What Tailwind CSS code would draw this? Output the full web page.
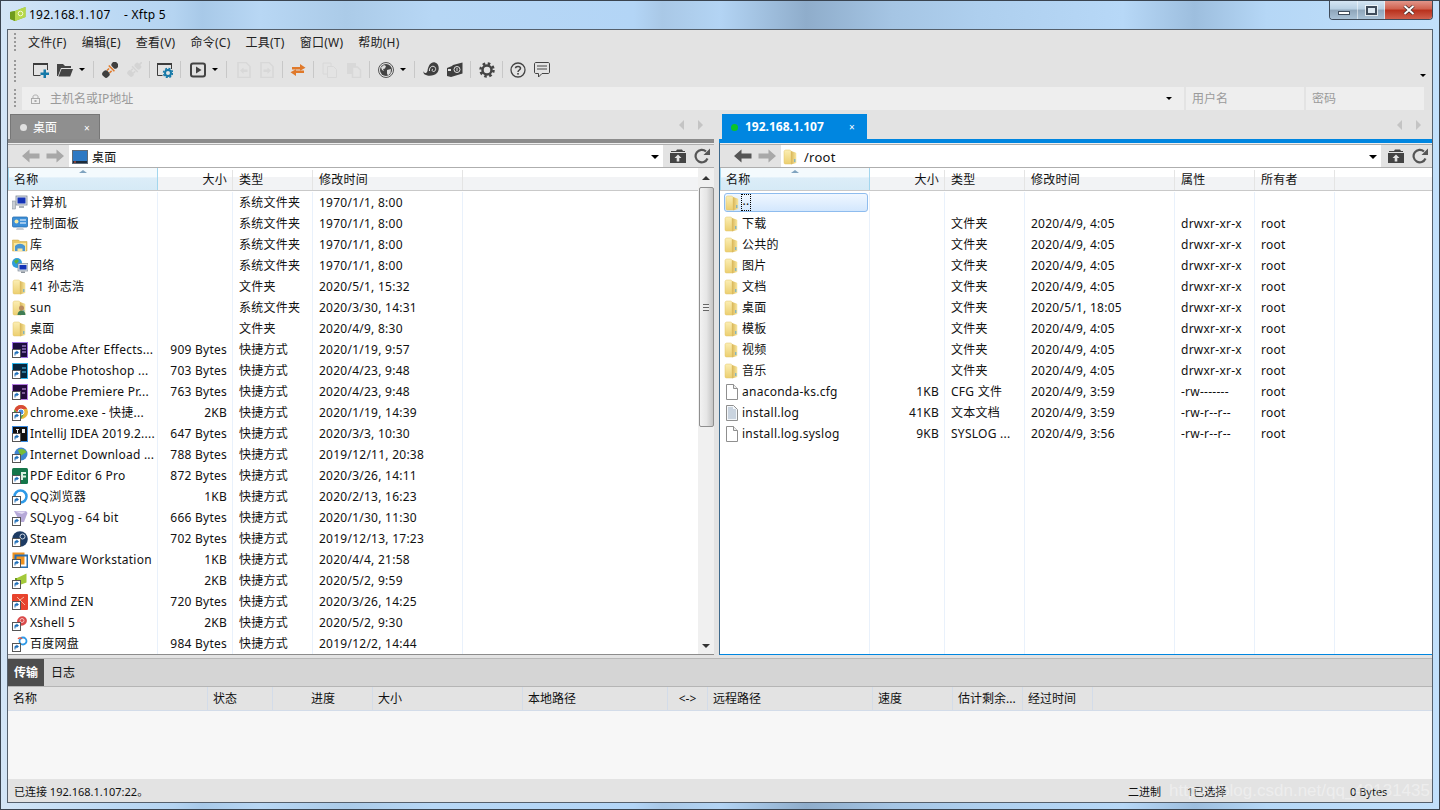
<!DOCTYPE html>
<html lang="en">
<head>
<meta charset="UTF-8">
<title>Xftp 5</title>
<script src="https://cdn.jsdelivr.net/npm/@tailwindcss/browser@4"></script>
</head>
<body class="font-['Noto_Sans','Noto_Sans_CJK_SC',sans-serif] text-[12px] tracking-[0.25px] leading-none text-[#111] overflow-hidden">

<!-- icon sprite -->
<svg class="absolute w-0 h-0">
  <defs>
    <linearGradient id="fy" x1="0" x2="0" y1="0" y2="1"><stop offset="0" stop-color="#fbeeb4"/><stop offset="1" stop-color="#eccf70"/></linearGradient>
    <linearGradient id="fy2" x1="0" x2="1" y1="0" y2="0"><stop offset="0" stop-color="#d9b658"/><stop offset="1" stop-color="#f8e79f"/></linearGradient>
  </defs>
  <symbol id="new" viewBox="0 0 16 16"><path d="M.5 2v11.5h7M14.500 2v6" fill="none" stroke="#3c3c3c"/><path d="M0 1h15v2H0z" fill="#3c3c3c"/><path d="M10.500 7.500h2.500v3h3v2.500h-3v3h-2.500v-3h-3v-2.500h3z" fill="#1679a8"/></symbol>
  <symbol id="open" viewBox="0 0 16 16"><path d="M0 14V2h6l2 2h6v2H4L1 14z" fill="#444"/><path d="M4.500 7H16l-2.800 7.500H1.500z" fill="#444"/></symbol>
  <symbol id="plug" viewBox="0 0 16 16"><g transform="rotate(45 8 8)"><rect x="4.500" y="-2" width="7" height="6" rx="2.500" fill="#3f3f3f"/><rect x="4" y="5" width="8" height="1.500" fill="#e0792a"/><rect x="5.500" y="7.500" width="1.500" height="3" fill="#e0792a"/><rect x="9" y="7.500" width="1.500" height="3" fill="#e0792a"/><rect x="4.500" y="10.500" width="7" height="6.500" rx="2.500" fill="#3f3f3f"/></g></symbol>
  <symbol id="unplug" viewBox="0 0 16 16"><g transform="rotate(45 8 8)" fill="#d4d4d4"><rect x="7.200" y="-3" width="1.600" height="4"/><rect x="4.500" y="0" width="7" height="5" rx="2"/><rect x="4" y="6" width="8" height="1.500"/><rect x="5.500" y="8" width="1.500" height="2.500"/><rect x="9" y="8" width="1.500" height="2.500"/><rect x="4.500" y="10.500" width="7" height="5" rx="2"/></g></symbol>
  <symbol id="setwin" viewBox="0 0 16 16"><path d="M.5 2v11.500h5M14.500 2v5" fill="none" stroke="#3c3c3c"/><path d="M0 1h15v2H0z" fill="#3c3c3c"/><circle cx="11" cy="11" r="3" fill="none" stroke="#1679a8" stroke-width="2"/><circle cx="11" cy="11" r="4.500" fill="none" stroke="#1679a8" stroke-width="1.500" stroke-dasharray="2 1.530"/></symbol>
  <symbol id="play" viewBox="0 0 16 16"><rect x="1" y="1.500" width="14" height="13" rx="2" fill="none" stroke="#444" stroke-width="2"/><path d="M6 4.500l5.500 3.500L6 11.500z" fill="#444"/></symbol>
  <symbol id="docl" viewBox="0 0 16 16"><path d="M2 .5h8l4 4v11H2z" fill="none" stroke="#d8d8d8" stroke-width="1.500"/><path d="M4 8.500l3.500-3v2h4v2.500h-4v2z" fill="#d8d8d8"/></symbol>
  <symbol id="docr" viewBox="0 0 16 16"><path d="M2 .5h8l4 4v11H2z" fill="none" stroke="#d8d8d8" stroke-width="1.500"/><path d="M12 8.500l-3.500-3v2h-4v2.500h4v2z" fill="#d8d8d8"/></symbol>
  <symbol id="swap" viewBox="0 0 16 16"><path d="M2 7.500V5h8V2l5.500 3.700L10 8.800V7.500z" fill="#e0792a"/><path d="M14 8.500V11H6v3L.5 10.300 6 7.200v1.300z" fill="#e0792a"/></symbol>
  <symbol id="copy" viewBox="0 0 16 16"><path d="M1 1h8v11H1z" fill="none" stroke="#d8d8d8"/><path d="M5.500 4.500h6l3 3v8h-9z" fill="#e3e3e3" stroke="#d8d8d8"/></symbol>
  <symbol id="paste" viewBox="0 0 16 16"><path d="M1 1h9v11H1z" fill="#d8d8d8"/><path d="M6.500 5h5l3 3v7.500h-8z" fill="#e3e3e3" stroke="#d8d8d8" stroke-width="1.500"/></symbol>
  <symbol id="globe" viewBox="0 0 16 16"><circle cx="8" cy="8" r="7.500" fill="#e3e3e3" stroke="#555"/><circle cx="8" cy="8" r="6" fill="#444"/><path d="M3 5.500l3-2.500 2 1-1 2.500-2 .5 1 2-2-1zM9 8l4-1-.5 4-2.500 2.500-1-2z" fill="#ddd"/></symbol>
  <symbol id="snail" viewBox="0 0 16 16"><path d="M0 9c2 3 3.500 2.500 4.500 0C5 4 8-.5 12 .5c4 1 5 7 2 10.500-3 3-9 4-13 1z" fill="#3f3f3f"/><path d="M6.500 9c-.5-3 2-5.500 4.500-4.500 2.500 1 2 5-.5 5-1.500 0-2-2-.5-2.500" fill="none" stroke="#e3e3e3"/></symbol>
  <symbol id="dfolder" viewBox="0 0 16 16"><path d="M0 6l5-2 1-1 9.500-2.500v11L4 15l-4-1z" fill="#3f3f3f"/><circle cx="10" cy="7.500" r="3" fill="none" stroke="#e3e3e3"/><path d="M10 6v3" stroke="#e3e3e3"/><path d="M1 7h3v2H1z" fill="#e3e3e3"/></symbol>
  <symbol id="gear" viewBox="0 0 16 16"><circle cx="8" cy="8" r="4.500" fill="none" stroke="#444" stroke-width="2.500"/><circle cx="8" cy="8" r="6.500" fill="none" stroke="#444" stroke-width="2.500" stroke-dasharray="2.550 2.550"/></symbol>
  <symbol id="help" viewBox="0 0 16 16"><circle cx="8" cy="8" r="7" fill="none" stroke="#444" stroke-width="1.300"/><path d="M5.500 6.200C5.700 3.800 10.500 3.800 10.500 6.300 10.500 8 8 8 8 10" fill="none" stroke="#444" stroke-width="1.500"/><rect x="7.200" y="11" width="1.600" height="1.600" fill="#444"/></symbol>
  <symbol id="chat" viewBox="0 0 16 16"><path d="M2 .5h12c1 0 1.500.5 1.500 1.500v8c0 1-.5 1.500-1.500 1.500H8L4.500 15v-3.500H2C1 11.500.5 11 .5 10V2C.5 1 1 .5 2 .5z" fill="none" stroke="#444"/><path d="M3 4h10M3 7h10" stroke="#444"/></symbol>
  <symbol id="fup" viewBox="0 0 16 16"><path d="M1 3h5l1-1.500h5L13 3h2v1H1z" fill="#444"/><path d="M0 5h16v10H0z" fill="#444"/><path d="M8 6.500l3.500 3.500H9.300v3.500H6.700V10H4.500z" fill="#e3e3e3"/></symbol>
  <symbol id="refresh" viewBox="0 0 16 16"><path d="M13.500 10.500A6.200 6.200 0 1 1 12 3.500" fill="none" stroke="#555" stroke-width="2.200"/><path d="M9.500 7h6.500V.5z" fill="#555"/></symbol>
  <symbol id="back" viewBox="0 0 18 14"><path d="M0 7l7.500-6.500v4h10v5h-10v4z" fill="currentColor"/></symbol>
  <symbol id="fwd" viewBox="0 0 18 14"><path d="M18 7L10.500.5v4H.5v5h10v4z" fill="currentColor"/></symbol>
  <symbol id="logo" viewBox="0 0 16 16"><path d="M0 6l5-1 10.500-4v10L5 15l-5-2z" fill="#8dbb27"/><path d="M5 5l10.500-4v10L5 15z" fill="#b6d84a"/><circle cx="10.500" cy="7.500" r="2.300" fill="none" stroke="#f3f8d8"/><path d="M0 6l5-1v10l-5-2z" fill="#6f9c1c"/></symbol>

  <symbol id="folder" viewBox="0 0 16 16"><path d="M1 2.500C1 1.500 2 1 3 1h3.500C7.500 1 8 1.800 8 2.500V15H2.500C1.500 15 1 14.500 1 13.500z" fill="url(#fy)" stroke="#e2c569" stroke-width=".5"/><path d="M8 2l4.500 1.500c.5.200.8.500.8 1V14l-5.300 1.500z" fill="url(#fy2)"/><rect x="11.300" y="10" width="1" height="3" fill="#5aa7d8"/></symbol>
  <symbol id="sc" viewBox="0 0 16 16"><rect x=".5" y="7.500" width="8" height="8" fill="#fff" stroke="#555"/><path d="M2.500 13.500V11c0-1 1-1.500 2-1.500V8.500l2.500 2-2.500 2v-1c-.8 0-1 .3-1 2z" fill="#1e6fb8"/></symbol>
  <symbol id="pc" viewBox="0 0 16 16"><rect x="4" y="1" width="11" height="9" fill="#dde3ea" stroke="#7d8794" stroke-width=".8"/><rect x="5.500" y="2.500" width="8" height="6" fill="#1433b8"/><path d="M7 11h5v2H7z" fill="#a8b0b8"/><rect x="0" y="6" width="3.500" height="8" fill="#c9ced4" stroke="#7d8794" stroke-width=".5"/></symbol>
  <symbol id="cp" viewBox="0 0 16 16"><rect x=".5" y="1" width="15" height="10" rx="1" fill="#3c8fd8" stroke="#2a6fb0" stroke-width=".8"/><circle cx="4.500" cy="5.500" r="2" fill="#f5e9a0"/><path d="M8 4h6M8 7h6" stroke="#fff" stroke-width="1.200"/><path d="M5 11.500h6l1 2.500H4z" fill="#c9ced4"/></symbol>
  <symbol id="lib" viewBox="0 0 16 16"><path d="M.5 3h6l1.500 1.500h7V14H.5z" fill="#e9c766" stroke="#c9a23f" stroke-width=".5"/><path d="M2 6h12v8H2z" fill="#f8e79f"/><path d="M3 9c3-3 7-3 10 0v5h-2.500v-2.500h-5V14H3z" fill="#4a95cf"/></symbol>
  <symbol id="net" viewBox="0 0 16 16"><circle cx="5" cy="5" r="5" fill="#2f9cdc"/><path d="M2 3l3-2 2 2-3 3zM6 7l3-1 0 3z" fill="#5fb13a"/><rect x="6" y="5.500" width="10" height="7.500" fill="#d9e2ea" stroke="#6f7a86" stroke-width=".6"/><rect x="7.500" y="7" width="7" height="4.500" fill="#1433b8"/><path d="M9 13.500h4V15H9z" fill="#8a939c"/></symbol>
  <symbol id="user" viewBox="0 0 16 16"><use href="#folder"/><circle cx="9.500" cy="8" r="2.500" fill="#b98a5e"/><path d="M5.500 15c0-3 2-4.500 4-4.500s4 1.500 4 4.500z" fill="#3f7d54"/></symbol>
  <symbol id="ae" viewBox="0 0 16 16"><rect x=".5" y=".5" width="15" height="15" fill="#1c0d3f" stroke="#9a6fe0"/><path d="M10 4h4M10 7h4M10 10h4" stroke="#c7a4f5"/><use href="#sc"/></symbol>
  <symbol id="ps" viewBox="0 0 16 16"><rect x=".5" y=".5" width="15" height="15" fill="#06263d" stroke="#2fb4ea"/><path d="M10 5h4M10 9h4" stroke="#55c6f2"/><use href="#sc"/></symbol>
  <symbol id="pr" viewBox="0 0 16 16"><rect x=".5" y=".5" width="15" height="15" fill="#24093c" stroke="#b47ce0"/><path d="M10 5h4M10 9h3" stroke="#d5a8f0"/><use href="#sc"/></symbol>
  <symbol id="chrome" viewBox="0 0 16 16"><circle cx="9" cy="7" r="7" fill="#e8b73a"/><path d="M9 0a7 7 0 0 0-6.500 4.500L6 8l3-4h6A7 7 0 0 0 9 0z" fill="#d84a38"/><path d="M2.500 4.500a7 7 0 0 0 6.500 9.500l3-5H6z" fill="#4aa750"/><circle cx="9" cy="7" r="3" fill="#4a8fe0" stroke="#fff"/><use href="#sc"/></symbol>
  <symbol id="idea" viewBox="0 0 16 16"><rect x=".5" y=".5" width="15" height="15" fill="#111" stroke="#3a8be0"/><path d="M4 3h3v1H6v4H5V4H4zM10 3h3v4h-3z" fill="#eee"/><use href="#sc"/></symbol>
  <symbol id="idm" viewBox="0 0 16 16"><circle cx="9" cy="7" r="6.500" fill="#3f86d0"/><path d="M6 3c3-2 7-1 8.500 2-2 1-4 3-6 4z" fill="#79bd37"/><use href="#sc"/></symbol>
  <symbol id="pdf" viewBox="0 0 16 16"><rect x="0" y="0" width="16" height="16" rx="1.500" fill="#15764a"/><path d="M9 4h5v2h-3v1.500h3v2h-3V12H9z" fill="#d9f0e0"/><use href="#sc"/></symbol>
  <symbol id="qq" viewBox="0 0 16 16"><circle cx="8.500" cy="7.500" r="6" fill="none" stroke="#2e9ae8" stroke-width="2.500"/><use href="#sc"/></symbol>
  <symbol id="sql" viewBox="0 0 16 16"><path d="M2 1h12l1.500 2L12 12H8z" fill="#b6a9d8"/><path d="M3 1.500h11L10 4z" fill="#e2dcf3"/><use href="#sc"/></symbol>
  <symbol id="steam" viewBox="0 0 16 16"><circle cx="8" cy="8" r="7.800" fill="#1d3b63"/><circle cx="10.500" cy="5.500" r="2.500" fill="none" stroke="#cfd8e3"/><use href="#sc"/></symbol>
  <symbol id="vm" viewBox="0 0 16 16"><rect x=".5" y=".5" width="12" height="12" fill="#f0921e"/><rect x="3.500" y="3.500" width="12" height="12" fill="none" stroke="#2a6fb0" stroke-width="2"/><use href="#sc"/></symbol>
  <symbol id="xf" viewBox="0 0 16 16"><path d="M5 5l9.500-4.500v9L5 13z" fill="#a3c93a"/><path d="M3 5h2v8H3z" fill="#6f9c1c"/><use href="#sc"/></symbol>
  <symbol id="xm" viewBox="0 0 16 16"><rect x="0" y="0" width="16" height="16" rx="1" fill="#e8432d"/><path d="M5 3l3 3 4-3M6 11l2-5 5 5" stroke="#f5b7a0" fill="none"/><use href="#sc"/></symbol>
  <symbol id="xs" viewBox="0 0 16 16"><path d="M5 6c1-5 6-6 8.500-3.500S15 9 11 10.500L6 11z" fill="#d94a4a"/><circle cx="10" cy="5.500" r="2" fill="none" stroke="#f5c0c0"/><use href="#sc"/></symbol>
  <symbol id="bd" viewBox="0 0 16 16"><circle cx="11" cy="5" r="3.500" fill="none" stroke="#2e9ae8" stroke-width="1.800"/><path d="M6 3c1-1.500 3-1.500 4 0" fill="none" stroke="#e8533a" stroke-width="1.300"/><use href="#sc"/></symbol>
  <symbol id="file" viewBox="0 0 16 16"><path d="M2.500 .5h7l4 4v11h-11z" fill="#fff" stroke="#8f8f8f"/><path d="M9.500 .5v4h4" fill="#eee" stroke="#8f8f8f"/></symbol>
  <symbol id="txt" viewBox="0 0 16 16"><path d="M2.500 .5h7l4 4v11h-11z" fill="#f4f7fa" stroke="#8f8f8f"/><path d="M4 3h5M4 5h8M4 7h8M4 9h8M4 11h8M4 13h8" stroke="#9fb0c4"/></symbol>
  <symbol id="desk" viewBox="0 0 16 16"><rect x=".5" y="1.500" width="15" height="13" fill="#2d79c4" stroke="#5f6b78"/><rect x="1" y="12" width="14" height="2" fill="#1b2a3a"/><rect x="2" y="12.500" width="2" height="1" fill="#e8533a"/></symbol>
</svg>

<!-- window frame -->
<div class="w-[1440px] h-[810px] flex flex-col border border-[#3a4450] bg-[linear-gradient(90deg,#d3e5f6_0,#bcd9f4_8%,#b5d4f1_12%,#a8c9e8_14%,#b8d7f4_18%,#abcbe8_24%,#b7d7f5_30%,#b3d5f6_44%,#a9c8e6_46%,#b3d4f4_50%,#8fadcb_56%,#a5c5e4_62%,#aecfee_68%,#b7d8f7_78%,#9dbede_83%,#b5d7f6_88%,#c2e0fb_100%)]">

  <!-- title bar -->
  <div class="h-[28px] shrink-0 flex items-start">
    <svg class="w-4 h-4 mt-[5px] ml-[9px]"><use href="#logo"/></svg>
    <span class="ml-[3px] mt-[8px] whitespace-pre text-black">192.168.1.107    - Xftp 5</span>
    <div class="ml-auto mr-[6px] flex h-[19px] border border-t-0 border-[#3f4b5a] rounded-b-[4px] overflow-hidden">
      <div class="w-[28px] flex items-end justify-center pb-[4px] border-r border-white/50 bg-[linear-gradient(#d5e5f3_0,#b7cfe3_45%,#8fa5ba_50%,#a9c1d6_100%)]"><div class="w-[12px] h-[4px] bg-white border border-[#3f4b5a]"></div></div>
      <div class="w-[27px] flex items-center justify-center border-r border-white/50 bg-[linear-gradient(#d5e5f3_0,#b7cfe3_45%,#8fa5ba_50%,#a9c1d6_100%)]"><div class="w-[11px] h-[9px] border-2 border-[#3f4b5a] bg-[#dfe9f2] outline outline-white/70"></div></div>
      <div class="w-[47px] flex items-center justify-center bg-[linear-gradient(#e2958a_0,#d0604d_45%,#b8301c_50%,#d0604d_100%)]">
        <svg class="w-[12px] h-[10px]" viewBox="0 0 12 10"><path d="M1.500 1l9 8M10.500 1l-9 8" stroke="#3f2a2a" stroke-width="3.400"/><path d="M1.500 1l9 8M10.500 1l-9 8" stroke="#fff" stroke-width="2"/></svg>
      </div>
    </div>
  </div>

  <!-- application -->
  <div class="mx-[6px] h-[774px] shrink-0 border border-[#55606c] bg-[#e3e3e3] flex flex-col relative">

    <!-- menu -->
    <div class="h-[26px] shrink-0 flex items-center">
      <div class="ml-[6px] w-[2px] h-[20px] bg-[repeating-linear-gradient(#999_0,#999_2px,transparent_2px,transparent_4px)]"></div>
      <div class="ml-[12px] flex gap-[15px] text-[#222]">
        <span>文件(F)</span><span>编辑(E)</span><span>查看(V)</span><span>命令(C)</span><span>工具(T)</span><span>窗口(W)</span><span>帮助(H)</span>
      </div>
    </div>

    <!-- toolbar -->
    <div class="h-[31px] shrink-0 flex items-center relative">
      <div class="ml-[6px] w-[2px] h-[24px] bg-[repeating-linear-gradient(#999_0,#999_2px,transparent_2px,transparent_4px)]"></div>
      <div class="flex items-center ml-[17px] -mt-[4px]">
        <svg class="w-4 h-4"><use href="#new"/></svg>
        <svg class="w-4 h-4 ml-[8px]"><use href="#open"/></svg>
        <div class="ml-[6px] border-x-[3px] border-t-[3px] border-x-transparent border-t-black"></div>
        <div class="ml-[8px] w-px h-[17px] bg-[#c8c8c8]"></div>
        <svg class="w-4 h-4 ml-[8px]"><use href="#plug"/></svg>
        <svg class="w-4 h-4 ml-[8px]"><use href="#unplug"/></svg>
        <div class="ml-[7px] w-px h-[17px] bg-[#c8c8c8]"></div>
        <svg class="w-4 h-4 ml-[7px]"><use href="#setwin"/></svg>
        <div class="ml-[7px] w-px h-[17px] bg-[#c8c8c8]"></div>
        <svg class="w-4 h-4 ml-[9px]"><use href="#play"/></svg>
        <div class="ml-[6px] border-x-[3px] border-t-[3px] border-x-transparent border-t-black"></div>
        <div class="ml-[8px] w-px h-[17px] bg-[#c8c8c8]"></div>
        <svg class="w-4 h-4 ml-[9px]"><use href="#docl"/></svg>
        <svg class="w-4 h-4 ml-[7px]"><use href="#docr"/></svg>
        <div class="ml-[7px] w-px h-[17px] bg-[#c8c8c8]"></div>
        <svg class="w-4 h-4 ml-[7px]"><use href="#swap"/></svg>
        <div class="ml-[7px] w-px h-[17px] bg-[#c8c8c8]"></div>
        <svg class="w-4 h-4 ml-[8px]"><use href="#copy"/></svg>
        <svg class="w-4 h-4 ml-[8px]"><use href="#paste"/></svg>
        <div class="ml-[7px] w-px h-[17px] bg-[#c8c8c8]"></div>
        <svg class="w-4 h-4 ml-[8px]"><use href="#globe"/></svg>
        <div class="ml-[6px] border-x-[3px] border-t-[3px] border-x-transparent border-t-black"></div>
        <div class="ml-[8px] w-px h-[17px] bg-[#c8c8c8]"></div>
        <svg class="w-4 h-4 ml-[8px]"><use href="#snail"/></svg>
        <svg class="w-4 h-4 ml-[8px]"><use href="#dfolder"/></svg>
        <div class="ml-[7px] w-px h-[17px] bg-[#c8c8c8]"></div>
        <svg class="w-4 h-4 ml-[8px]"><use href="#gear"/></svg>
        <div class="ml-[7px] w-px h-[17px] bg-[#c8c8c8]"></div>
        <svg class="w-4 h-4 ml-[7px]"><use href="#help"/></svg>
        <svg class="w-4 h-4 ml-[8px]"><use href="#chat"/></svg>
      </div>
      <div class="ml-auto mr-[6px] mt-[8px] border-x-[3px] border-t-[3px] border-x-transparent border-t-black"></div>
    </div>

    <!-- address bar -->
    <div class="h-[23px] shrink-0 flex items-center">
      <div class="ml-[6px] w-[2px] h-[20px] bg-[repeating-linear-gradient(#999_0,#999_2px,transparent_2px,transparent_4px)]"></div>
      <div class="ml-[6px] w-[1162px] h-[23px] bg-[#eeeeee] flex items-center">
        <svg class="ml-[9px] w-[9px] h-[10px]" viewBox="0 0 9 10"><path d="M2 4V2.500C2 .5 7 .5 7 2.500V4" fill="none" stroke="#aaa"/><rect x=".5" y="4.500" width="8" height="5" fill="none" stroke="#aaa"/><rect x="3.500" y="6" width="2" height="2" fill="#aaa"/></svg>
        <span class="ml-[10px] text-[#9a9a9a] tracking-normal">主机名或IP地址</span>
        <div class="ml-auto mr-[12px] border-x-[3px] border-t-[3px] border-x-transparent border-t-black"></div>
      </div>
      <div class="ml-[2px] w-[118px] h-[23px] bg-[#eeeeee] flex items-center pl-[6px] text-[#9a9a9a] tracking-normal">用户名</div>
      <div class="ml-[2px] w-[118px] h-[23px] bg-[#eeeeee] flex items-center pl-[6px] text-[#9a9a9a] tracking-normal">密码</div>
    </div>

    <!-- file panes -->
    <div class="h-[545px] shrink-0 flex">

      <!-- left pane -->
      <div class="w-[706px] flex flex-col">
        <div class="h-[29px] shrink-0 flex items-end pl-[2px]">
          <div class="w-[90px] h-[25px] pt-[1px] bg-[#8f8f8f] border-t border-x border-[#777] flex items-center">
            <div class="ml-[9px] w-[7px] h-[7px] rounded-full bg-[#e0e0e0]"></div>
            <span class="ml-[6px] text-white tracking-normal">桌面</span>
            <span class="ml-auto mr-[9px] text-white text-[10px]">×</span>
          </div>
          <div class="ml-auto mr-[11px] mb-[9px] flex gap-[14px]">
            <div class="border-y-[5px] border-r-[5px] border-y-transparent border-r-[#c4c4c4]"></div>
            <div class="border-y-[5px] border-l-[5px] border-y-transparent border-l-[#c4c4c4]"></div>
          </div>
        </div>
        <div class="h-[4px] shrink-0 bg-[#8c8c8c]"></div>
        <div class="h-[1px] shrink-0 bg-[#eee]"></div>
        <div class="h-[24px] shrink-0 flex border-y border-[#aeaeae]">
          <div class="w-[61px] flex items-center text-[#a8a8a8]">
            <svg class="ml-[14px] w-[18px] h-[14px]"><use href="#back"/></svg>
            <svg class="ml-[6px] w-[18px] h-[14px]"><use href="#fwd"/></svg>
          </div>
          <div class="w-[594px] bg-white flex items-center">
            <svg class="ml-[3px] w-4 h-4 mt-[2px]"><use href="#desk"/></svg>
            <span class="ml-[4px] mt-[3px]">桌面</span>
            <div class="ml-auto mr-[4px] mt-[2px] border-x-[4px] border-t-[4px] border-x-transparent border-t-black"></div>
          </div>
          <div class="flex-1 flex items-center">
            <svg class="ml-[7px] w-4 h-4"><use href="#fup"/></svg>
            <svg class="ml-[8px] w-4 h-4"><use href="#refresh"/></svg>
          </div>
        </div>
        <div class="flex-1 flex min-h-0 border-b border-[#8c8c8c]">
          <div class="w-[690px] flex flex-col bg-white">
            <div class="h-[23px] shrink-0 pt-[2px] flex border-b border-[#c9c9c9] bg-[linear-gradient(#fff_0,#fff_40%,#f2f3f5_40%,#f2f3f5_100%)]">
              <div class="w-[150px] -mt-[2px] flex items-center pl-[5px] pt-[2px] relative border-x border-[#a2d6ee] bg-[linear-gradient(#f4fafd_0,#f4fafd_40%,#dcedf8_45%,#d6eaf6_100%)]">名称<div class="absolute left-[70px] top-[2px] border-x-[4px] border-b-[3px] border-x-transparent border-b-[#7fa3bf]"></div></div>
              <div class="w-[75px] flex items-center justify-end pr-[5px] border-r border-[#e4e4e4]">大小</div>
              <div class="w-[80px] flex items-center pl-[6px] border-r border-[#e4e4e4]">类型</div>
              <div class="w-[150px] flex items-center pl-[6px] border-r border-[#e4e4e4]">修改时间</div>
            </div>
            <div id="left-list" class="pt-[1px] flex-1 overflow-hidden"></div>
          </div>
          <!-- scrollbar -->
          <div class="flex-1 flex flex-col items-center bg-[#f0f0f0]">
            <div class="h-[19px] flex items-center"><div class="border-x-[4px] border-b-[4px] border-x-transparent border-b-[#333]"></div></div>
            <div class="w-[15px] h-[240px] rounded-[2px] border border-[#8f8f8f] bg-[linear-gradient(90deg,#f2f2f2_0,#e6e6e6_50%,#c4c4c4_100%)] flex items-center justify-center">
              <div class="w-[6px] h-[7px] bg-[repeating-linear-gradient(#666_0,#666_1px,#eee_1px,#eee_3px)]"></div>
            </div>
            <div class="mt-auto h-[17px] flex items-center"><div class="border-x-[4px] border-t-[4px] border-x-transparent border-t-[#333]"></div></div>
          </div>
        </div>
      </div>

      <div class="w-[5px] shrink-0"></div>

      <!-- right pane -->
      <div class="flex-1 flex flex-col min-w-0">
        <div class="h-[29px] shrink-0 flex items-end pl-[3px]">
          <div class="w-[145px] h-[25px] pt-[1px] bg-[#0086e0] flex items-center">
            <div class="ml-[9px] w-[7px] h-[7px] rounded-full bg-[#0cc428]"></div>
            <span class="ml-[7px] text-white font-bold tracking-normal">192.168.1.107</span>
            <span class="ml-auto mr-[12px] text-white text-[10px]">×</span>
          </div>
          <div class="ml-auto mr-[11px] mb-[9px] flex gap-[14px]">
            <div class="border-y-[5px] border-r-[5px] border-y-transparent border-r-[#c4c4c4]"></div>
            <div class="border-y-[5px] border-l-[5px] border-y-transparent border-l-[#c4c4c4]"></div>
          </div>
        </div>
        <div class="h-[4px] shrink-0 bg-[#0086e0]"></div>
        <div class="flex-1 min-h-0 flex flex-col border-l border-b border-l-[#3f6a8c] border-b-[#0086e0]">
          <div class="h-[1px] shrink-0 bg-[#eee]"></div>
          <div class="h-[24px] shrink-0 flex border-y border-[#aeaeae]">
            <div class="w-[61px] flex items-center">
              <svg class="ml-[14px] w-[18px] h-[14px] text-[#555]"><use href="#back"/></svg>
              <svg class="ml-[6px] w-[18px] h-[14px] text-[#a8a8a8]"><use href="#fwd"/></svg>
            </div>
            <div class="w-[600px] bg-white flex items-center">
              <svg class="ml-[2px] w-4 h-4 mt-[2px]"><use href="#folder"/></svg>
              <span class="ml-[5px] mt-[3px] text-[13px]">/root</span>
              <div class="ml-auto mr-[4px] mt-[2px] border-x-[4px] border-t-[4px] border-x-transparent border-t-black"></div>
            </div>
            <div class="flex-1 flex items-center">
              <svg class="ml-[7px] w-4 h-4"><use href="#fup"/></svg>
              <svg class="ml-[8px] w-4 h-4"><use href="#refresh"/></svg>
            </div>
          </div>
          <div class="h-[23px] shrink-0 pt-[2px] flex border-b border-[#c9c9c9] bg-[linear-gradient(#fff_0,#fff_40%,#f2f3f5_40%,#f2f3f5_100%)]">
            <div class="w-[150px] -mt-[2px] flex items-center pl-[5px] pt-[2px] relative border-x border-[#a2d6ee] bg-[linear-gradient(#f4fafd_0,#f4fafd_40%,#dcedf8_45%,#d6eaf6_100%)]">名称<div class="absolute left-[70px] top-[2px] border-x-[4px] border-b-[3px] border-x-transparent border-b-[#7fa3bf]"></div></div>
            <div class="w-[75px] flex items-center justify-end pr-[5px] border-r border-[#e4e4e4]">大小</div>
            <div class="w-[80px] flex items-center pl-[6px] border-r border-[#e4e4e4]">类型</div>
            <div class="w-[150px] flex items-center pl-[6px] border-r border-[#e4e4e4]">修改时间</div>
            <div class="w-[80px] flex items-center pl-[6px] border-r border-[#e4e4e4]">属性</div>
            <div class="w-[80px] flex items-center pl-[6px] border-r border-[#e4e4e4]">所有者</div>
          </div>
          <div id="right-list" class="pt-[1px] flex-1 overflow-hidden bg-white"></div>
        </div>
      </div>
    </div>

    <!-- transfer panel -->
    <div class="h-[4px] shrink-0 border-b border-[#b8b8b8]"></div>
    <div class="h-[28px] shrink-0 flex bg-[#d5d5d5] border-b border-[#b5b5b5]">
      <div class="w-[36px] flex items-center justify-center bg-[#4d4d4d] text-white font-bold tracking-normal">传输</div>
      <div class="ml-[7px] flex items-center tracking-normal">日志</div>
    </div>
    <div class="h-[24px] shrink-0 flex border-b border-[#d3dce9] tracking-normal">
      <div class="w-[200px] flex items-center pl-[5px] border-r border-[#d3dce9]">名称</div>
      <div class="w-[65px] flex items-center pl-[5px] border-r border-[#d3dce9]">状态</div>
      <div class="w-[100px] flex items-center justify-end pr-[37px] border-r border-[#d3dce9]">进度</div>
      <div class="w-[150px] flex items-center pl-[5px] border-r border-[#d3dce9]">大小</div>
      <div class="w-[145px] flex items-center pl-[5px] border-r border-[#d3dce9]">本地路径</div>
      <div class="w-[40px] flex items-center justify-center border-r border-[#d3dce9]">&lt;-&gt;</div>
      <div class="w-[165px] flex items-center pl-[5px] border-r border-[#d3dce9]">远程路径</div>
      <div class="w-[80px] flex items-center pl-[5px] border-r border-[#d3dce9]">速度</div>
      <div class="w-[70px] flex items-center pl-[5px] border-r border-[#d3dce9]">估计剩余...</div>
      <div class="w-[70px] flex items-center pl-[5px] border-r border-[#d3dce9]">经过时间</div>
    </div>
    <div class="h-[68px] shrink-0 bg-[#f7f7f7]"></div>
    <div class="flex-1 flex items-center relative text-[11px] tracking-normal pt-[1px]">
      <span class="ml-[6px]">已连接 192.168.1.107:22。</span>
      <span class="absolute left-[1120px]">二进制</span>
      <span class="absolute left-[1179px]">1已选择</span>
      <span class="absolute left-[1342px]">0 Bytes</span>
      <span class="absolute right-[2px] top-[3px] font-['Liberation_Sans',sans-serif] text-[17px] text-white/40">https://blog.csdn.net/qq_40131435</span>
    </div>
  </div>
</div>

<script>
  // rows for both file lists
  const leftFiles = [
    ['pc', '计算机', '', '系统文件夹', '1970/1/1, 8:00'],
    ['cp', '控制面板', '', '系统文件夹', '1970/1/1, 8:00'],
    ['lib', '库', '', '系统文件夹', '1970/1/1, 8:00'],
    ['net', '网络', '', '系统文件夹', '1970/1/1, 8:00'],
    ['folder', '41 孙志浩', '', '文件夹', '2020/5/1, 15:32'],
    ['user', 'sun', '', '系统文件夹', '2020/3/30, 14:31'],
    ['folder', '桌面', '', '文件夹', '2020/4/9, 8:30'],
    ['ae', 'Adobe After Effects...', '909 Bytes', '快捷方式', '2020/1/19, 9:57'],
    ['ps', 'Adobe Photoshop ...', '703 Bytes', '快捷方式', '2020/4/23, 9:48'],
    ['pr', 'Adobe Premiere Pr...', '763 Bytes', '快捷方式', '2020/4/23, 9:48'],
    ['chrome', 'chrome.exe - 快捷...', '2KB', '快捷方式', '2020/1/19, 14:39'],
    ['idea', 'IntelliJ IDEA 2019.2....', '647 Bytes', '快捷方式', '2020/3/3, 10:30'],
    ['idm', 'Internet Download ...', '788 Bytes', '快捷方式', '2019/12/11, 20:38'],
    ['pdf', 'PDF Editor 6 Pro', '872 Bytes', '快捷方式', '2020/3/26, 14:11'],
    ['qq', 'QQ浏览器', '1KB', '快捷方式', '2020/2/13, 16:23'],
    ['sql', 'SQLyog - 64 bit', '666 Bytes', '快捷方式', '2020/1/30, 11:30'],
    ['steam', 'Steam', '702 Bytes', '快捷方式', '2019/12/13, 17:23'],
    ['vm', 'VMware Workstation', '1KB', '快捷方式', '2020/4/4, 21:58'],
    ['xf', 'Xftp 5', '2KB', '快捷方式', '2020/5/2, 9:59'],
    ['xm', 'XMind ZEN', '720 Bytes', '快捷方式', '2020/3/26, 14:25'],
    ['xs', 'Xshell 5', '2KB', '快捷方式', '2020/5/2, 9:30'],
    ['bd', '百度网盘', '984 Bytes', '快捷方式', '2019/12/2, 14:44']
  ];
  const rightFiles = [
    ['folder', '..', '', '', '', '', ''],
    ['folder', '下载', '', '文件夹', '2020/4/9, 4:05', 'drwxr-xr-x', 'root'],
    ['folder', '公共的', '', '文件夹', '2020/4/9, 4:05', 'drwxr-xr-x', 'root'],
    ['folder', '图片', '', '文件夹', '2020/4/9, 4:05', 'drwxr-xr-x', 'root'],
    ['folder', '文档', '', '文件夹', '2020/4/9, 4:05', 'drwxr-xr-x', 'root'],
    ['folder', '桌面', '', '文件夹', '2020/5/1, 18:05', 'drwxr-xr-x', 'root'],
    ['folder', '模板', '', '文件夹', '2020/4/9, 4:05', 'drwxr-xr-x', 'root'],
    ['folder', '视频', '', '文件夹', '2020/4/9, 4:05', 'drwxr-xr-x', 'root'],
    ['folder', '音乐', '', '文件夹', '2020/4/9, 4:05', 'drwxr-xr-x', 'root'],
    ['file', 'anaconda-ks.cfg', '1KB', 'CFG 文件', '2020/4/9, 3:59', '-rw-------', 'root'],
    ['txt', 'install.log', '41KB', '文本文档', '2020/4/9, 3:59', '-rw-r--r--', 'root'],
    ['file', 'install.log.syslog', '9KB', 'SYSLOG ...', '2020/4/9, 3:56', '-rw-r--r--', 'root']
  ];
  while (rightFiles.length < 22) rightFiles.push(null);

  function nameCell(f, selected) {
    if (!f) return '<div class="w-[150px] border-r border-[#e9f1fb]"></div>';
    if (selected) {
      // ".." row: highlighted box with a dotted focus rectangle
      return `<div class="w-[150px] pl-[4px] pr-[1px] py-[1px] border-r border-[#e9f1fb] flex">
        <div class="flex-1 flex items-center rounded-[3px] border border-[#8ebcee] bg-[linear-gradient(#f0f7ff,#d3e7fd)]">
          <svg class="w-4 h-4 shrink-0"><use href="#${f[0]}"/></svg>
          <span class="w-[10px] h-full flex items-end justify-center pb-[3px] border border-dotted border-black">${f[1]}</span>
        </div></div>`;
    }
    return `<div class="w-[150px] pl-[4px] flex items-center border-r border-[#e9f1fb]"><svg class="w-4 h-4 shrink-0"><use href="#${f[0]}"/></svg><span class="ml-[2px] whitespace-nowrap">${f[1]}</span></div>`;
  }

  function cells(f, extra) {
    const v = f || [];
    let html = `<div class="w-[75px] flex items-center justify-end pr-[5px] border-r border-[#e9f1fb]">${v[2] || ''}</div>
      <div class="w-[80px] flex items-center pl-[6px] border-r border-[#e9f1fb]">${v[3] || ''}</div>
      <div class="w-[150px] flex items-center pl-[6px] border-r border-[#e9f1fb]">${v[4] || ''}</div>`;
    if (extra) {
      html += `<div class="w-[80px] flex items-center pl-[6px] border-r border-[#e9f1fb]">${v[5] || ''}</div>
      <div class="w-[80px] flex items-center pl-[6px] border-r border-[#e9f1fb]">${v[6] || ''}</div>`;
    }
    return html;
  }

  document.getElementById('left-list').innerHTML = leftFiles.map(f =>
    `<div class="flex h-[21px]">${nameCell(f, false)}${cells(f, false)}</div>`).join('');
  document.getElementById('right-list').innerHTML = rightFiles.map((f, i) =>
    `<div class="flex h-[21px]">${nameCell(f, i === 0)}${cells(f, true)}</div>`).join('');
</script>
</body>
</html>
